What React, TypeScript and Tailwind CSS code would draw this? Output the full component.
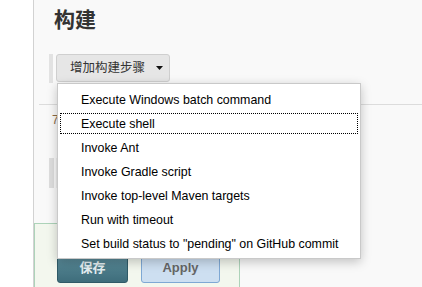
import React from 'react';

const FONT = { fontFamily: '"Liberation Sans", "Noto Sans CJK SC", sans-serif' };

const steps = [
  'Execute Windows batch command',
  'Execute shell',
  'Invoke Ant',
  'Invoke Gradle script',
  'Invoke top-level Maven targets',
  'Run with timeout',
  'Set build status to "pending" on GitHub commit',
];

const StepMenu: React.FC<{ focused: number }> = ({ focused }) => (
  <div className="absolute left-[57px] top-[83px] w-[304px] border border-[#c9c9c9] bg-white pt-[4px] pb-[2px] px-[2px] shadow-[0_3px_10px_rgba(0,0,0,0.22)]">
    {steps.map((label, i) => (
      <div key={label} className="relative flex h-[24px] items-center pl-[21px] text-[12.4px] text-black">
        {i === focused && (
          <span className="absolute left-0 right-0 top-[1px] h-[21px] border border-dotted border-black" />
        )}
        {label}
      </div>
    ))}
  </div>
);

export default function App() {
  return (
    <div className="relative flex h-[287px] w-[422px] overflow-hidden bg-white" style={FONT}>
      <div className="w-[34px] shrink-0 border-r border-[#d2d2d2] bg-white" />
      <div className="flex flex-1 flex-col bg-[#f9f9f9]">
        <h2 className="pl-[20px] pt-[6px] text-[21px] font-bold leading-[28px] text-[#333]">构建</h2>

        <div className="mt-[20px] flex pl-[15px]">
          <div className="h-[29px] w-[4px] bg-[#e2e2e2]" />
          <button className="ml-[3px] flex h-[28px] w-[114px] items-center rounded-[3px] border border-[#cfcfcf] bg-[#e6e6e6] pl-[13px] text-[12.5px] text-[#333]">
            增加构建步骤
            <svg className="ml-[11px]" width="7" height="4" viewBox="0 0 7 4">
              <path d="M0 0h7L3.5 4z" fill="#111" />
            </svg>
          </button>
        </div>

        <div className="ml-[5px] mt-[21px] h-px bg-[#dcdcdc]" />

        <div className="mt-[8px] pl-[18px] text-[12px] leading-[14px] text-[#8a6a48]">7</div>

        <div className="mt-[31px] flex pl-[15px]">
          <div className="h-[30px] w-[5px] bg-[#dedede]" />
          <div className="ml-[2px] h-[30px] w-px bg-[#ececec]" />
        </div>

        <div className="mt-[35px] flex w-[206px] flex-1 gap-[13px] border border-b-0 border-[#add3b9] bg-[#f3f7ee] pl-[22px] pt-[29px]">
          <button className="h-[30px] w-[71px] rounded-[3px] border border-[#2f5a67] bg-gradient-to-b from-[#5d8e9c] to-[#3e6d7b] text-[13px] font-bold text-[#e4eef1]">
            保存
          </button>
          <button className="h-[30px] w-[79px] rounded-[3px] border border-[#7ea8d4] bg-[#cddff1] text-[13px] font-bold text-[#666]">
            Apply
          </button>
        </div>
      </div>

      <StepMenu focused={1} />
    </div>
  );
}
